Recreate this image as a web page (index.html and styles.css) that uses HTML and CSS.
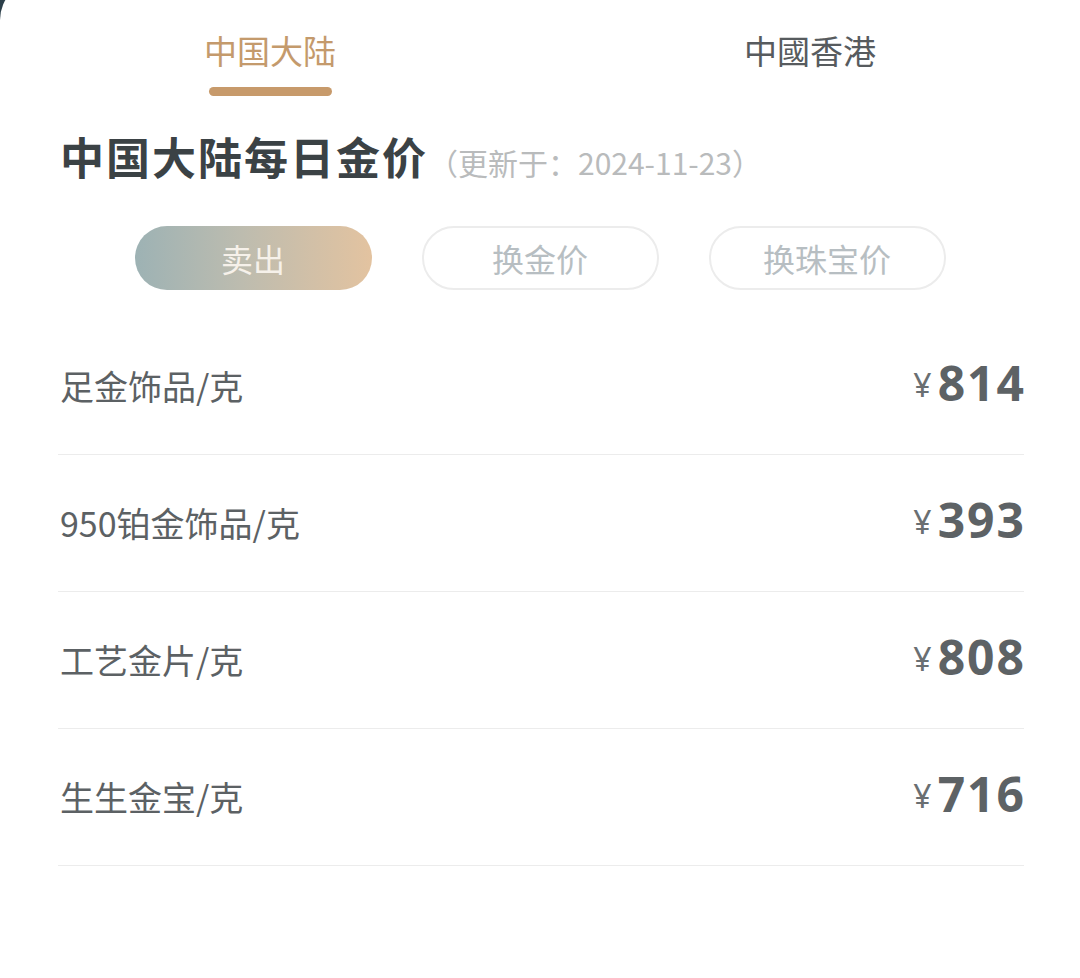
FILE: index.html
```html
<!DOCTYPE html>
<html lang="zh-CN">
<head>
<meta charset="utf-8">
<link rel="stylesheet" href="styles.css">
</head>
<body>
<div class="card">
  <div class="tabs">
    <div class="tab active"><span>中国大陆</span><i class="bar"></i></div>
    <div class="tab"><span>中國香港</span></div>
  </div>
  <div class="heading">
    <h1>中国大陆每日金价</h1>
    <span class="date">（更新于：2024-11-23）</span>
  </div>
  <div class="pills">
    <div class="pill on">卖出</div>
    <div class="pill">换金价</div>
    <div class="pill">换珠宝价</div>
  </div>
  <ul class="list">
    <li><span class="name">足金饰品/克</span><span class="price"><em>¥</em>814</span></li>
    <li><span class="name">950铂金饰品/克</span><span class="price"><em>¥</em>393</span></li>
    <li><span class="name">工艺金片/克</span><span class="price"><em>¥</em>808</span></li>
    <li><span class="name">生生金宝/克</span><span class="price"><em>¥</em>716</span></li>
  </ul>
</div>
</body>
</html>
```
FILE: styles.css
```css
* { box-sizing: border-box; }
html, body {
  margin: 0;
  padding: 0;
  background: #2c3f4a;
  width: 1080px;
  height: 978px;
  overflow: hidden;
}
.card {
  margin-top: -20px;
  height: 998px;
  background: #ffffff;
  border-top-left-radius: 40px;
  font-family: "Noto Sans CJK SC", "Noto Sans", sans-serif;
  padding-top: 20px;
}
.tabs {
  display: grid;
  grid-template-columns: 1fr 1fr;
  height: 100px;
}
.tab {
  display: flex;
  flex-direction: column;
  align-items: center;
  padding-top: 28px;
  font-size: 33px;
  line-height: 44px;
  color: #575b5e;
}
.tab.active { color: #c49a6c; }
.bar {
  display: block;
  width: 123px;
  height: 9px;
  border-radius: 5px;
  background: #c79a6b;
  margin-top: 15px;
}
.heading {
  display: flex;
  align-items: baseline;
  padding: 28px 0 0 60px;
  height: 126px;
}
.heading h1 {
  margin: 0;
  font-size: 44px;
  line-height: 56px;
  font-weight: 700;
  color: #3b4245;
  letter-spacing: 2px;
}
.date {
  margin-left: 0;
  font-size: 30px;
  color: #b9bbbc;
}
.pills {
  display: flex;
  justify-content: center;
  gap: 50px;
}
.pill {
  width: 237px;
  height: 64px;
  border-radius: 32px;
  border: 2px solid #ececec;
  display: flex;
  align-items: center;
  justify-content: center;
  font-size: 32px;
  color: #b7bec2;
}
.pill.on {
  border: none;
  background: linear-gradient(90deg, #9db2b4 0%, #bdbcaf 45%, #e3c3a0 100%);
  color: #f6f1ea;
}
.list {
  list-style: none;
  margin: 28px 0 0 0;
  padding: 0 56px 0 58px;
}
.list li {
  height: 137px;
  border-bottom: 1px solid #ececec;
  display: flex;
  align-items: center;
  justify-content: space-between;
}
.name {
  padding-left: 2px;
  padding-bottom: 2px;
  font-size: 34px;
  color: #5c6164;
}
.price {
  font-family: "Noto Sans", "Open Sans", sans-serif;
  font-weight: 700;
  font-size: 48px;
  line-height: 60px;
  letter-spacing: 2px;
  margin-right: -2px;
  padding-bottom: 6px;
  color: #5d6265;
  display: flex;
  align-items: center;
}
.price em {
  font-style: normal;
  font-weight: 400;
  font-size: 32px;
  letter-spacing: 0;
  color: #6a6f72;
  margin-right: 6px;
  padding-top: 4px;
}
```
